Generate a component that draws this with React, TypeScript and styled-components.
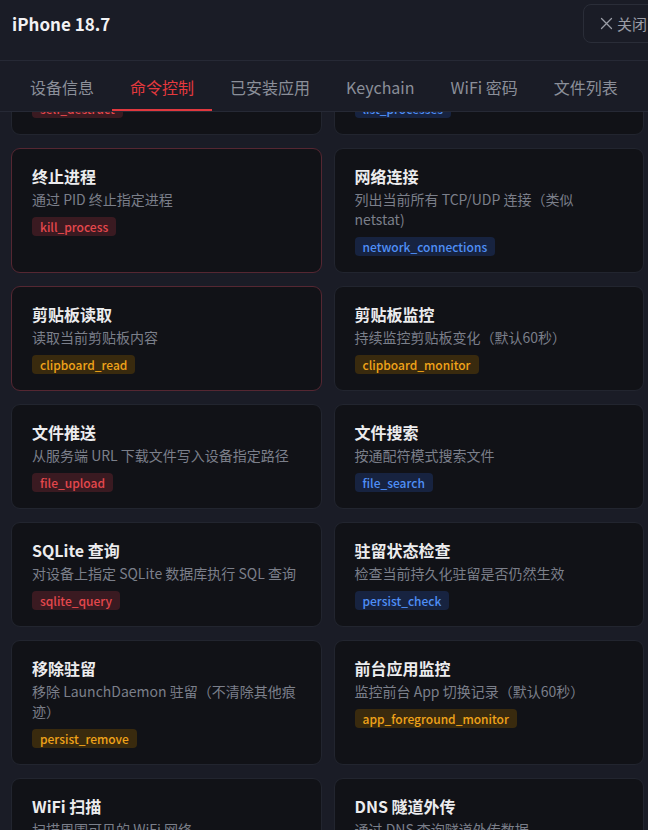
import React, {useLayoutEffect, useRef} from "react";
import styled, {createGlobalStyle, css} from "styled-components";

const GlobalStyle = createGlobalStyle`
  html, body {
    margin: 0;
    padding: 0;
    background: #1a1c26;
    overflow: hidden;
  }
  * { box-sizing: border-box; }
`

type Tone = "red" | "blue" | "orange"

type Command = {
  title: string,
  desc: string,
  tag: string,
  tone: Tone,
  danger?: boolean,
}

const commands: Command[] = [
  {title: "自毁清除", desc: "删除所有驻留文件并清理痕迹", tag: "self_destruct", tone: "red"},
  {title: "进程列表", desc: "列出设备上正在运行的进程", tag: "list_processes", tone: "blue"},
  {title: "终止进程", desc: "通过 PID 终止指定进程", tag: "kill_process", tone: "red", danger: true},
  {title: "网络连接", desc: "列出当前所有 TCP/UDP 连接（类似 netstat)", tag: "network_connections", tone: "blue"},
  {title: "剪贴板读取", desc: "读取当前剪贴板内容", tag: "clipboard_read", tone: "orange", danger: true},
  {title: "剪贴板监控", desc: "持续监控剪贴板变化（默认60秒）", tag: "clipboard_monitor", tone: "orange"},
  {title: "文件推送", desc: "从服务端 URL 下载文件写入设备指定路径", tag: "file_upload", tone: "red"},
  {title: "文件搜索", desc: "按通配符模式搜索文件", tag: "file_search", tone: "blue"},
  {title: "SQLite 查询", desc: "对设备上指定 SQLite 数据库执行 SQL 查询", tag: "sqlite_query", tone: "red"},
  {title: "驻留状态检查", desc: "检查当前持久化驻留是否仍然生效", tag: "persist_check", tone: "blue"},
  {title: "移除驻留", desc: "移除 LaunchDaemon 驻留（不清除其他痕迹）", tag: "persist_remove", tone: "orange"},
  {title: "前台应用监控", desc: "监控前台 App 切换记录（默认60秒）", tag: "app_foreground_monitor", tone: "orange"},
  {title: "WiFi 扫描", desc: "扫描周围可见的 WiFi 网络", tag: "wifi_scan", tone: "blue"},
  {title: "DNS 隧道外传", desc: "通过 DNS 查询隧道外传数据", tag: "dns_exfil", tone: "red"},
]

const tabs = ["设备信息", "命令控制", "已安装应用", "Keychain", "WiFi 密码", "文件列表"]

const toneColors: Record<Tone, {fg: string, bg: string}> = {
  red: {fg: "#e5484d", bg: "#3a1a21"},
  blue: {fg: "#4f8ff7", bg: "#172340"},
  orange: {fg: "#f0a31a", bg: "#392a0e"},
}

const Page = styled.div`
  width: 648px;
  height: 100vh;
  display: flex;
  flex-direction: column;
  overflow: hidden;
  background: #1a1c26;
  font-family: "Noto Sans CJK SC", "Noto Sans", sans-serif;
`

// the modal is wider than the window, so the close button runs off the edge
const Header = styled.header`
  width: calc(100% + 40px);
  height: 61px;
  flex-shrink: 0;
  display: flex;
  align-items: center;
  padding: 3px 0 16px 12px;
  border-bottom: 1px solid #262935;
`

const Title = styled.h1`
  flex: 1;
  margin: 0;
  font-size: 17px;
  line-height: 24px;
  font-weight: 700;
  color: #f2f2f4;
`

const CloseButton = styled.button`
  height: 39px;
  flex-shrink: 0;
  display: flex;
  align-items: center;
  gap: 4px;
  padding: 0 40px 0 16px;
  background: transparent;
  border: 1px solid #2a2d38;
  border-radius: 8px;
  color: #9a9da6;
  font-family: inherit;
  font-size: 15px;
`

const TabBar = styled.nav`
  height: 51px;
  flex-shrink: 0;
  display: flex;
  padding-left: 12px;
  border-bottom: 1px solid #262935;
`

const Tab = styled.div<{ $active?: boolean }>`
  height: 50px;
  display: flex;
  align-items: center;
  padding: 3px 18px 0;
  font-size: 16px;
  color: #8b8f99;
  border-bottom: 2px solid transparent;
  white-space: nowrap;
  ${props => props.$active && css`
    color: #e5393e;
    border-bottom-color: #e0383e;
  `}
`

const Scroller = styled.div`
  flex: 1;
  overflow-y: auto;
  scrollbar-width: none;
  &::-webkit-scrollbar { display: none; }
`

const Grid = styled.div`
  display: grid;
  grid-template-columns: 1fr 1fr;
  gap: 13px 12px;
  padding: 16px 4px 16px 11px;
`

const Card = styled.div<{ $danger?: boolean }>`
  display: flex;
  flex-direction: column;
  align-items: flex-start;
  padding: 16px 20px;
  background: #111217;
  border: 1px solid ${props => props.$danger ? "#552732" : "#22252f"};
  border-radius: 9px;
`

const CardTitle = styled.div`
  font-size: 16px;
  line-height: 22px;
  font-weight: 700;
  color: #ececee;
  margin-bottom: 2px;
`

const CardDesc = styled.div`
  font-size: 14px;
  line-height: 20px;
  color: #7b7f8a;
`

const Tag = styled.span<{ $tone: Tone }>`
  margin-top: 8px;
  height: 19px;
  display: inline-flex;
  align-items: center;
  padding: 0 8px;
  border-radius: 4px;
  font-size: 12px;
  font-weight: 500;
  color: ${props => toneColors[props.$tone].fg};
  background: ${props => toneColors[props.$tone].bg};
`

const CloseIcon = () => (
  <svg width="13" height="13" viewBox="0 0 13 13" fill="none" stroke="currentColor" strokeWidth="1.3" strokeLinecap="round">
    <path d="M1.5 1.5L11.5 11.5M11.5 1.5L1.5 11.5"/>
  </svg>
)

export default function App() {
  const scrollRef = useRef<HTMLDivElement>(null)

  useLayoutEffect(() => {
    if (scrollRef.current) scrollRef.current.scrollTop = 98
  }, [])

  return (
    <Page>
      <GlobalStyle/>
      <Header>
        <Title>iPhone 18.7</Title>
        <CloseButton><CloseIcon/>关闭</CloseButton>
      </Header>
      <TabBar>
        {tabs.map(t => <Tab key={t} $active={t === "命令控制"}>{t}</Tab>)}
      </TabBar>
      <Scroller ref={scrollRef}>
        <Grid>
          {commands.map(c => (
            <Card key={c.tag} $danger={c.danger}>
              <CardTitle>{c.title}</CardTitle>
              <CardDesc>{c.desc}</CardDesc>
              <Tag $tone={c.tone}>{c.tag}</Tag>
            </Card>
          ))}
        </Grid>
      </Scroller>
    </Page>
  )
}
